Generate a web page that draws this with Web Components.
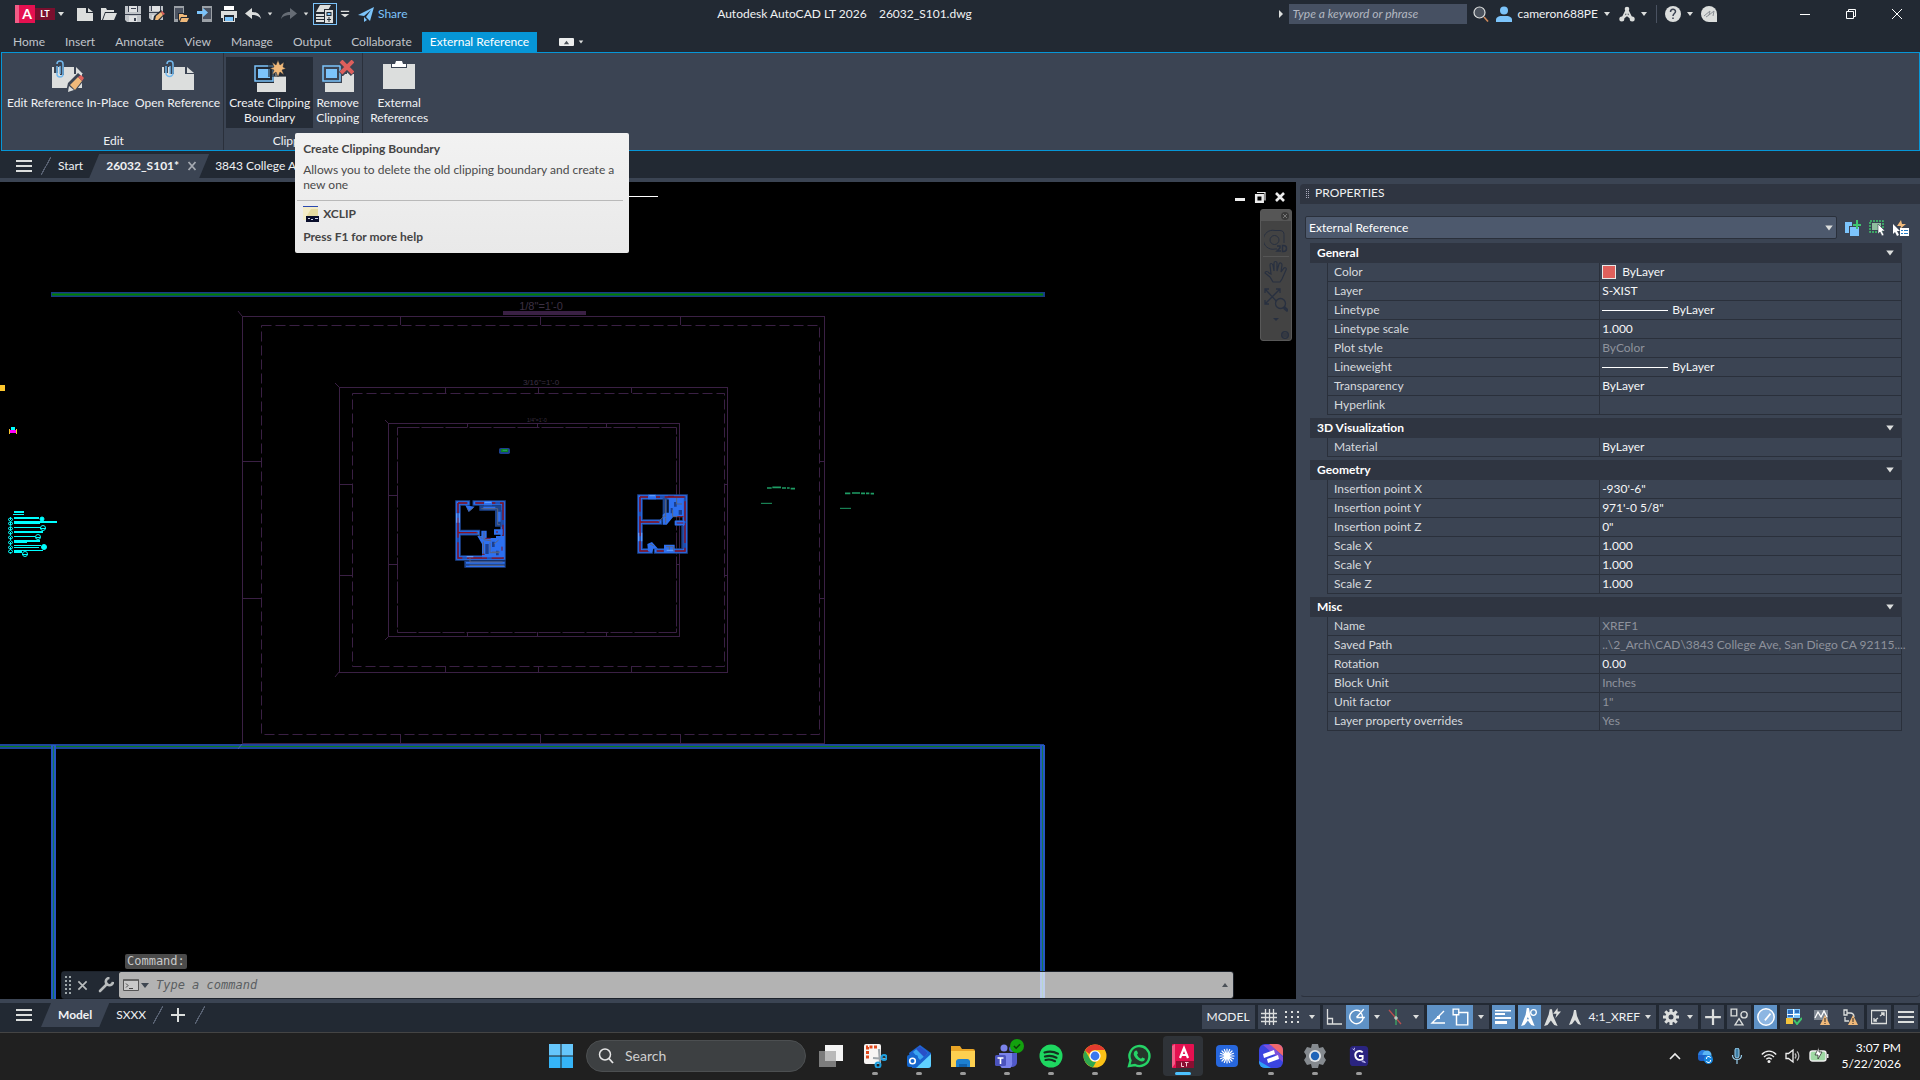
<!DOCTYPE html>
<html lang="en">
<head>
<meta charset="utf-8">
<title>Autodesk AutoCAD LT 2026 - 26032_S101.dwg</title>
<style>
  :root {
    --dark: #222933; --panel: #3b4453; --head: #2f3541; --blue: #0696d7; --hi: #5f92c6;
    --text: #f0f1f3; --line: #2a303b;
  }
  body { margin: 0; background: #000; color: var(--text); font: 12px/16px Lato, "Noto Sans", sans-serif; overflow: hidden; }
</style>
</head>
<body>
<cad-app></cad-app>
<script>
const BASE = `
  *{box-sizing:border-box}
  button{font:inherit;color:inherit;background:none;border:0;padding:0;margin:0;display:flex;align-items:center;justify-content:center;white-space:nowrap}
  .row{display:flex;align-items:center}
`;
function define(name, css, html, setup) {
  const t = document.createElement('template');
  t.innerHTML = `<style>${BASE}${css}</style>${html}`;
  customElements.define(name, class extends HTMLElement {
    connectedCallback() {
      if (this.shadowRoot) return;
      this.attachShadow({ mode: 'open' }).append(t.content.cloneNode(true));
      if (setup) setup.call(this, this.shadowRoot);
    }
  });
}

/* Icon library: [viewBox size, markup] */
const W = '#dcdedd', B = '#7cc4fb', O = '#f0b97a', G = '#3fc66e';
const PAGE = `<path fill="${W}" d="M0 2h9v5h7v8H0z"/><path fill="${W}" d="M11 2l5 4h-5z"/>`;
const ICONS = {
  new: [16, PAGE],
  open: [16, `<path fill="${W}" d="M0 2h5l1 2h7v2H4L1 14H0zM4.500 7H16l-3 7H2z"/>`],
  save: [16, `<path fill="#bfc3c8" d="M0 0h16v16H2l-2-2z"/><path fill="#3a4150" d="M3 0h1v6H3zM12 0h1v6h-1zM0 8h16v1H0z"/><path fill="#dfe1e3" d="M4 0h8v6H4zM4 10h8v6H4z"/><path fill="#3a4150" d="M9 12h2v3H9zM6 2h5v1H6z"/>`],
  saveas: [16, `<path fill="#bfc3c8" d="M0 0h14v14H2l-2-2z"/><path fill="#3a4150" d="M2 0h1v5H2zM11 0h1v5h-1zM0 6h14v1H0z"/><path fill="#dfe1e3" d="M3 0h8v5H3zM3 9h7v5H3z"/><path fill="#222933" d="M4 15l1-5 7-6 4 4-6 7z"/><path fill="${O}" d="M6 14l1-4 5-4 2 3-5 5z"/><path fill="#e0605c" d="M12 6l1-1 3 3-2 1z"/>`],
  phoneopen: [16, `<path fill="#9ba0a6" d="M1 0h10v16H1z"/><path fill="#4b5260" d="M2 2h8v11H2z"/><path fill="#222933" d="M5 7h11v9H5z"/><path fill="${O}" d="M6 8h4l1 1h3v2H8l-2 4zM8.500 12H16l-2 4H7z"/>`],
  phonesave: [16, `<path fill="#9ba0a6" d="M5 0h10v16H5z"/><path fill="#4b5260" d="M6 2h8v11H6z"/><path fill="#7cc4fb" d="M0 5h6V2l5 4.500-5 4.500V8H0z"/>`],
  print: [16, `<path fill="#fff" d="M3 0h10v4H3z"/><path fill="${W}" d="M0 5h16v7h-3V9H3v3H0z"/><path fill="${B}" d="M4 11h8v4H4z"/><path fill="${W}" d="M2 10h1v6H2zM13 10h1v6h-1zM3 15h10v1H3z"/>`],
  undo: [16, `<path fill="${W}" d="M7 2v4c5 0 8 2 9 7-2-3-5-4-9-4v4L0 7.500z"/>`],
  redo: [16, `<path fill="#666c75" d="M9 2v4C4 6 1 8 0 13c2-3 5-4 9-4v4l7-5.500z"/>`],
  sheet: [20, `<path fill="${W}" d="M5 1h11l-4 7H1zM1 10h8v2H1zM1 13h8v2H1zM1 16h8v2H1z"/><path fill="#222933" d="M9 5h10v15H9z"/><path fill="${W}" d="M10 6h8v13h-8z"/><path fill="#222933" d="M11.500 8h5v4h-5zM13.500 13h1v5h-1zM12 15h4v1h-4z"/><path fill="${B}" d="M12.500 9h3v2h-3z"/>`],
  dd: [8, `<path fill="${W}" d="M1 2h6L4 6z"/>`],
  ddbar: [12, `<path fill="${W}" d="M1 2h10v1.500H1zM1 6h10l-5 4z"/>`],
  play: [8, `<path fill="${W}" d="M2 0l4 4-4 4z"/>`],
  share: [16, `<path fill="${B}" d="M0 9L16 1l-4 14-4-4 5-7-7 6zM6 11l3 3-3 2z"/>`],
  mag: [16, `<circle cx="6.500" cy="6.500" r="5.500" fill="#4c535e" stroke="${W}" stroke-width="1.200"/><path stroke="#d08a5a" stroke-width="1.600" d="M11 11l4 4.500"/>`],
  user: [16, `<circle cx="8" cy="4.500" r="4" fill="${B}"/><path fill="${B}" d="M0 16v-2c0-3 3-4 5-4h6c2 0 5 1 5 4v2z"/>`],
  apps: [16, `<path stroke="${W}" stroke-width="1.800" fill="none" d="M8 3v5M8 3L3 13M8 3l5 10M3 13l5-4 5 4"/><circle cx="8" cy="3" r="2.300" fill="${W}"/><circle cx="2.800" cy="13" r="2.500" fill="${W}"/><circle cx="13.200" cy="13" r="2.500" fill="${W}"/>`],
  help: [16, `<circle cx="8" cy="8" r="8" fill="${W}"/><path fill="none" stroke="#3a4150" stroke-width="1.500" d="M5.500 6c0-3.500 5-3.500 5-.5 0 2-2.500 2-2.500 4.500M8 11.500v1.500"/>`],
  feedback: [16, `<path fill="${W}" d="M8 0a8 8 0 0 1 8 8v8H8A8 8 0 0 1 8 0z"/><path stroke="#8a8f96" fill="none" d="M3 10l6-5-1 4 5-4-1 5M5 11l3-2"/>`],
  wmin: [12, `<path stroke="#fff" d="M1 6.500h10"/>`],
  wmax: [12, `<path stroke="#fff" fill="none" d="M1.500 3.500h7v7h-7zM3.500 3V1.500h7v7H9"/>`],
  wclose: [12, `<path stroke="#fff" fill="none" d="M1 1l10 10M11 1L1 11"/>`],
  burger: [16, `<path fill="${W}" d="M0 2h16v2H0zM0 7h16v2H0zM0 12h16v2H0z"/>`],
  plus: [16, `<path fill="${W}" d="M7 1h2v14H7zM1 7h14v2H1z"/>`],
  tabx: [10, `<path stroke="#a4a9b1" stroke-width="1.800" d="M1.500 1l7 8M8.500 1l-7 8"/>`],
  editref: [32, `<path fill="${W}" d="M0 7h22v7h8v14H0z"/><path fill="${W}" d="M24 7l7 7h-7z"/><path fill="none" stroke="#3b4453" stroke-width="4" d="M10 15V4a3 3 0 0 0-6 0v9"/><path fill="none" stroke="#73b9ee" stroke-width="1.500" d="M5 6v8a3 3 0 0 0 6 0V4a3 3 0 0 0-6 0M8 6v8"/><path fill="#3b4453" d="M14 32l2-9 10-10 7 6-8 10z"/><path fill="${O}" d="M18 25l8-8 4 4-7 9z"/><path fill="#e0605c" d="M26 17l3-2 3 3-2 3z"/><path fill="${W}" d="M17 26l5 4-6 2z"/>`],
  openref: [32, `<path fill="${W}" d="M0 7h23v7h9v16H0z"/><path fill="${W}" d="M25 7l7 6h-7z"/><path fill="none" stroke="#3b4453" stroke-width="4" d="M10 14V4a3 3 0 0 0-6 0v9"/><path fill="none" stroke="#73b9ee" stroke-width="1.500" d="M4 6v7a3.500 3.500 0 0 0 7 0V4a3 3 0 0 0-6 0M8 6v8"/>`],
  clip: [32, `<path fill="${W}" d="M3 16h18v-4h4v4h7v16H3z"/><path fill="#222933" d="M0 4h20v19H0z"/><path fill="none" stroke="${B}" stroke-width="1.500" d="M1 6h18v15H1z"/><path fill="${B}" d="M4 9h12v9H4z"/><path fill="#222933" d="M14 0h18v17H14z" opacity=".6"/><path fill="${O}" stroke="#222933" stroke-width=".5" d="M24 0l2 5 4-3-1 5 3 1.500-4 1.500 2 5-4-3-2 5-2-5-4 3 2-5-4-1.500 4-1.500-2-5 4 3z"/>`],
  remclip: [32, `<path fill="${W}" d="M3 16h18v-2h11v18H3z"/><path fill="${W}" d="M25 12l7 4h-7z"/><path fill="#3b4453" d="M0 4h20v19H0z"/><path fill="none" stroke="${B}" stroke-width="1.500" d="M1 6h17v15H1z"/><path fill="${B}" d="M4 9h11v9H4z"/><path stroke="#3b4453" stroke-width="6" d="M19 2l12 12M31 2L19 14"/><path stroke="#dd5f5c" stroke-width="4" d="M19 1l12 12M31 1L19 13"/>`],
  extref: [32, `<path fill="${W}" d="M0 4h32v25H0z"/><path fill="#3b4453" d="M8 4h16v4H8z"/><path fill="#fff" d="M9 4h3l1-3h6l1 3h3v3H9z"/>`],
  xclip: [16, `<path fill="#f3ecc9" d="M0 0h15v14H0z"/><path fill="#e6dca0" d="M8 3h7v8H3z"/><path fill="#2a49b0" d="M0 0h15v1H0z"/><path fill="#0a0f2c" d="M3 10h13v6H3z"/><path fill="#cfd4e6" d="M5 12h2v1H5zM8 13h2v1H8zM12 12h3v1h-3z"/>`],
  pickadd: [16, `<path fill="${B}" d="M0 2h7v4H4v7H0zM5 7h9v9H5z"/><path fill="${G}" d="M11 0h2v4h3v2h-3v3h-2V6H8V4h3z"/>`],
  selobj: [16, `<path fill="none" stroke="${G}" stroke-width="1.500" stroke-dasharray="2 1" d="M1 1h13v11H1z"/><path fill="#8fbf9f" d="M3 3h9v7H3z"/><path fill="#fff" stroke="#3b4453" stroke-width=".6" d="M9 4v10l2-2 2 4 2-1-2-4h3z"/>`],
  quick: [16, `<path fill="${O}" d="M8 0L4 6h4L7 9l6-5H9z"/><path fill="#fff" d="M0 4v10l2-2 2 4 2-1-2-4h3z"/><path fill="#fff" d="M7 8h9v8H7z"/><path fill="#2a7ec4" d="M8 10h2v1H8zM11 10h4v1h-4zM8 13h2v1H8zM11 13h4v1h-4z"/>`],
  grid: [16, `<path stroke="${W}" stroke-width="1.300" d="M4.500 0v16M8.500 0v16M12.500 0v16M0 4.500h16M0 8.500h16M0 12.500h16"/>`],
  snap: [16, `<path fill="${W}" d="M1 2h2v2H1zM7 2h2v2H7zM13 2h2v2h-2zM1 7h2v2H1zM7 7h2v2H7zM13 7h2v2h-2zM1 12h2v2H1zM7 12h2v2H7zM13 12h2v2h-2z"/>`],
  ortho: [16, `<path fill="none" stroke="${W}" stroke-width="1.300" d="M1.500 0v15H16M1.500 9.500h5V15"/>`],
  polar: [16, `<path fill="none" stroke="#fff" stroke-width="1.300" d="M13.500 9A6 6 0 1 1 11 3M7.500 8.500H15M7.500 8.500L14 1M11 4c1.500 1 2 3 2 4.500"/>`],
  iso: [16, `<path stroke="#b9504f" stroke-width="1.300" d="M1 1l12 14"/><path stroke="#3faa66" stroke-width="1.300" d="M8 0v16"/><path stroke="${W}" d="M6 9h4M8 7v4"/>`],
  track: [16, `<path fill="none" stroke="#fff" stroke-width="1.400" d="M14 2L2 14h13"/><path fill="#fff" d="M7 7h3v3H7z"/>`],
  osnap: [16, `<path fill="none" stroke="#fff" stroke-width="1.300" d="M4 4h10v11H4z"/><path fill="#5f92c6" stroke="#fff" stroke-width="1.200" d="M1 1h5v5H1z"/>`],
  lwt: [16, `<path fill="#fff" d="M0 1h16v1.500H0zM0 4h10v2H0zM0 8h16v2H0zM0 12h12v3H0z"/>`],
  ann1: [16, `<path fill="#fff" d="M6 0h2l1 6 4 10-3-1-3-4-3 4-3 1L5 6zM7 8l-1 2h2z"/><circle cx="12" cy="4" r="2.500" fill="none" stroke="#fff" stroke-width="1.200"/>`],
  ann2: [16, `<path fill="${W}" d="M6 1h2l1 6 4 9-3-1-3-4-3 4-3 1L5 6z"/><path fill="${W}" d="M13 0L9 5h3l-1 4 5-6h-3z"/>`],
  ann3: [16, `<path fill="${W}" d="M7 1h2l1 6 4 9-3-1-3-4-3 4-3 1L6 6z"/>`],
  gear: [16, `<path stroke="${W}" stroke-width="3" d="M8 0v16M0 8h16M2.300 2.300l11.400 11.400M13.700 2.300L2.300 13.700"/><circle cx="8" cy="8" r="5.500" fill="${W}"/><circle cx="8" cy="8" r="2.500" fill="#3b4453"/>`],
  isolate: [16, `<path fill="none" stroke="${W}" stroke-width="1.200" d="M1 1h5v6H1zM8 9.500l3.500 5.500h-7z"/><circle cx="12.500" cy="6" r="2.800" fill="none" stroke="${W}" stroke-width="1.200"/>`],
  perf: [16, `<circle cx="8" cy="8" r="7.300" fill="#8db6e2" stroke="#fff" stroke-width="1.300"/><path stroke="#fff" stroke-width="1.500" d="M7 11l5-6"/>`],
  xrefok: [16, `<path fill="${B}" d="M1 0h13v9H1z"/><path fill="#2f6ebc" d="M2 1h5v7H2zM9 1h4v3H9z"/><path stroke="#fff" d="M7.500 0v8M1 5.500h13"/><path fill="#f3c33c" d="M0 9h7v6H0z"/><path fill="none" stroke="${G}" stroke-width="2" d="M8 11l3 4 5-6"/>`],
  warn1: [16, `<path fill="#7e8792" d="M0 1h14v10H0z"/><path fill="none" stroke="#fff" stroke-width="1.300" d="M1 9l3-6 3 5 3-6 3 6"/><path fill="${O}" d="M11 6l5 10H6z"/><path stroke="#5b4a3a" stroke-width="1.300" d="M11 9v4M11 14v1"/>`],
  warn2: [16, `<path fill="none" stroke="${W}" stroke-width="1.300" d="M2 1h3v5H2zM5 4h3c3 0 4 2 4 4M3 8v4h4"/><path fill="${O}" d="M11 6l5 10H6z"/><path stroke="#5b4a3a" stroke-width="1.300" d="M11 9v4M11 14v1"/>`],
  clean: [16, `<path fill="none" stroke="${W}" stroke-width="1.300" d="M.5 1.500h15v13H.5zM9 7l4-3M13 7V4h-3M7 9l-4 3M3 9v3h3"/>`],
  cmdx: [12, `<path stroke="#b8bcbd" stroke-width="1.800" d="M1.500 1.500l9 9M10.500 1.500l-9 9"/>`],
  wrench: [16, `<path stroke="#b8bcbd" stroke-width="2.600" stroke-linecap="round" d="M2 14l7-7"/><path fill="none" stroke="#b8bcbd" stroke-width="2.600" d="M11.500 1A3.600 3.600 0 1 0 15 5"/>`],
  prompt: [16, `<path fill="#c9c9c9" stroke="#555" d="M.5 2.500h15v11H.5z"/><path fill="#666" d="M1 2h14v2H1z"/><path fill="none" stroke="#444" d="M3 6.500l2 2-2 2M6 11.500h4"/>`],
  ddark: [8, `<path fill="#3e4650" d="M0 2h8L4 7z"/>`],
  uparr: [8, `<path fill="#4b5158" d="M1 6h6L4 2z"/>`],
  vmin: [12, `<path fill="#ececec" d="M1 7h10v3H1z"/>`],
  vmax: [12, `<path fill="none" stroke="#ececec" stroke-width="2.500" d="M2.200 4.200h6.500v6.500H2.200z"/><path fill="none" stroke="#ececec" stroke-width="1.200" d="M3 1.500h8v8"/>`],
  vx: [12, `<path stroke="#ececec" stroke-width="2.600" d="M2 2l8 8M10 2l-8 8"/>`],
  wheel: [24, `<path fill="none" stroke="#283040" d="M11 1.500h5c3 0 4 2 4 4V14M11 1.500A9.500 9.500 0 1 0 11 20h2"/><circle cx="10.500" cy="11" r="4.500" fill="none" stroke="#283040"/><path fill="none" stroke="#283040" stroke-width="1.500" d="M13 17h3v2l-3 3h4M18.500 16.500v6h1c4 0 4-6 0-6z"/>`],
  hand: [24, `<path fill="none" stroke="#283040" stroke-width="1.200" d="M9 22l-3-5-5-4c0-2 3-2 4 0l2 1L6 5c0-2 2-2 3 0l1 6V3c0-2 3-2 3 0v8l2-7c1-2 3-1 3 1l-1 7 3-4c1-1 3 0 2 2l-4 9-2 3z"/>`],
  zoomext: [24, `<path fill="none" stroke="#283040" stroke-width="1.300" d="M1 1l14 15M16 1L1 16M1 5V1h4M12 1h4v4M1 12v4h4"/><circle cx="16.500" cy="15.500" r="5" fill="#434343" stroke="#283040" stroke-width="1.300"/><path stroke="#283040" stroke-width="3" d="M20 19.500l4 3.500"/>`],
  ddnav: [8, `<path fill="#283040" d="M1 2h6L4 5z"/>`],
  navx: [8, `<circle cx="4" cy="4" r="4" fill="#3a3a3a"/><path stroke="#777" d="M2 2l4 4M6 2L2 6"/>`],
  navm: [8, `<circle cx="4" cy="4" r="3.400" fill="none" stroke="#283040" stroke-width="1.200"/><path stroke="#283040" d="M1 3h6M1 5h6"/>`],
  win: [24, `<path fill="#66c6fb" d="M0 0h11.500v11.500H0zM12.500 0H24v11.500H12.500z"/><path fill="#35b4f7" d="M0 12.500h11.500V24H0zM12.500 12.500H24V24H12.500z"/>`],
  search: [16, `<circle cx="7" cy="6.500" r="5.500" fill="none" stroke="#e6e6e6" stroke-width="1.500"/><path stroke="#e6e6e6" stroke-width="1.800" d="M11 10.500l4 4.500"/>`],
  taskview: [24, `<path fill="#7c7c7c" d="M0 7h17v16H0z"/><path fill="#f4f4f4" d="M6 1h18v16H6z"/><path fill="#b9b9b9" d="M6 7h11v10H6z"/>`],
  snip: [24, `<rect x="1" y="0" width="17" height="20" rx="2" fill="#f7f5f4"/><path fill="none" stroke="#e0481c" stroke-width="3" stroke-dasharray="3 1.500" d="M14 3H4.500v13"/><path stroke="#9fa6ab" stroke-width="2.200" d="M16 5l1 13M10 14l13 1"/><circle cx="21" cy="13.500" r="2.500" fill="none" stroke="#1ea0e0" stroke-width="2"/><circle cx="15" cy="21" r="2.500" fill="none" stroke="#1ea0e0" stroke-width="2"/>`],
  outlook: [24, `<path fill="#1a63cf" d="M2 9L13 1l11 8v12a3 3 0 0 1-3 3H5z"/><path fill="#5fd0ff" d="M24 10v11a3 3 0 0 1-3 3H9z"/><path fill="#3aa4f0" d="M6 8l7-6 8 7-8 7z"/><path fill="#2850c8" d="M13 2l8 7-4 4-8-8z"/><rect y="11" width="11" height="12" rx="2" fill="#1466cc"/><circle cx="5.500" cy="17" r="2.800" fill="none" stroke="#fff" stroke-width="1.600"/>`],
  explorer: [24, `<path fill="#e9a526" d="M0 2h9l2 3h11a2 2 0 0 1 2 2v3H0z"/><path fill="#fdd050" d="M0 7h24v16H0z"/><path fill="#1d7fd0" d="M5 17a3 3 0 0 1 3-2h8a3 3 0 0 1 3 2v6H5z"/><path fill="#1161ab" d="M8 20h8v3H8z"/>`],
  teams: [24, `<circle cx="9" cy="4" r="3.500" fill="#7b83eb"/><circle cx="17" cy="5" r="3" fill="#5059c9"/><path fill="#5059c9" d="M13 9h9v9a5 5 0 0 1-9 3z"/><path fill="#7b83eb" d="M4 9h13v9a6 6 0 0 1-12 3z"/><rect y="11" width="11" height="11" rx="1.500" fill="#4b53bc"/><path stroke="#fff" stroke-width="1.600" d="M2.500 14h6M5.500 14v6"/>`],
  check: [16, `<circle cx="8" cy="8" r="8" fill="#13a10e"/><path fill="none" stroke="#0c3d0a" stroke-width="1.800" d="M4.500 8l2.500 2.500L11.500 6"/>`],
  spotify: [24, `<circle cx="12" cy="12" r="11.500" fill="#1ed760"/><path fill="none" stroke="#14301f" stroke-width="2.200" stroke-linecap="round" d="M5.500 8.500c4.500-1.500 9.500-1 13.500 1.200M6 12.500c4-1.200 8-.7 11.500 1.200M6.500 16c3.500-1 6.500-.5 9.500 1.200"/>`],
  chrome: [24, `<circle cx="12" cy="12" r="11.500" fill="#fbc116"/><path fill="#e33b2e" d="M12 .5A11.500 11.500 0 0 1 22 6H12a6 6 0 0 0-5.500 4L2 6.500A11.500 11.500 0 0 1 12 .5z"/><path fill="#2fa84f" d="M2 6.300L7 15a6 6 0 0 0 6 3l-3 5.300A11.500 11.500 0 0 1 2 6.300z"/><circle cx="12" cy="12" r="5.600" fill="#fff"/><circle cx="12" cy="12" r="4.400" fill="#3a78ee"/>`],
  whatsapp: [24, `<path fill="#26352b" stroke="#25d366" stroke-width="2.400" d="M2 22l1.500-5.500A10 10 0 1 1 8 21z"/><path fill="#25d366" d="M8 7c1-1 2-.5 2.300.5l.7 1.700-1 1.500c1 2 2 3 4 4l1.300-1.300 2.500 1.200c.5 3-3 3.400-5 2.400-3-1.300-5-3.500-6-6C6.500 9.500 7 8 8 7z"/>`],
  acad: [24, `<rect x="1" width="22" height="24" rx="1" fill="#e51050"/><path fill="#8a0f32" d="M5 17h18v7H5z"/><path fill="#f25c86" d="M1 2l3-2v20l-3 4z"/><path fill="none" stroke="#fff" stroke-width="2.200" d="M9 14l4-10 4 10M10.500 11h5"/><path stroke="#f3c8d4" fill="none" d="M10.500 18.500v4h2.500M14 18.500h3.500M15.500 18.500v4"/>`],
  burst: [24, `<rect x="1" y="1" width="22" height="22" rx="4" fill="#2767dd"/><path stroke="#fff" stroke-width="1.200" stroke-linecap="round" d="M12 5v14M5 12h14M7 7l10 10M17 7L7 17M9.300 5.500l5.400 13M5.500 14.700l13-5.400M14.700 5.500l-5.400 13M5.500 9.300l13 5.400"/>`],
  paper: [24, `<rect width="24" height="24" rx="6" fill="#3a45e0"/><path fill="#f0686c" d="M10 0h8a6 6 0 0 1 6 6v6z"/><path fill="#9a55d8" d="M4 1h8l12 12v5z" opacity=".7"/><path fill="#2fa0f5" d="M0 17l12 7H6a6 6 0 0 1-6-6z"/><path fill="#fff" d="M4 10l11-4 1 4-11 4zM8 15l11-4 1 4-11 4z"/>`],
  settings: [24, `<path fill="#858a8f" d="M9 0h6l1 4 4-1 3 5-2 3v2l2 3-3 5-4-1-1 4H9l-1-4-4 1-3-5 2-3v-2L1 8l3-5 4 1z"/><circle cx="12" cy="12" r="6" fill="#e3e6e8"/><circle cx="12" cy="12" r="4.200" fill="#1f64b8"/>`],
  gapp: [24, `<rect x="2" y="1" width="20" height="22" rx="4" fill="#2a2480"/><path fill="none" stroke="#fff" stroke-width="2" d="M16 8c-3-3-9-1-8 4s7 5 8 3v-3h-4"/><path stroke="#cfc8ff" d="M5 4l2 2M7 3v2M16 17l3 2M15 18l4 1"/>`],
  chev: [12, `<path fill="none" stroke="#eee" stroke-width="1.600" d="M1 9l5-5 5 5"/>`],
  cloud: [16, `<circle cx="6" cy="7" r="5" fill="#2a7de0"/><circle cx="10" cy="7" r="4.500" fill="#5cb6f5"/><path fill="#1c5fc4" d="M1 7h9v6H4a3 3 0 0 1-3-3z"/><circle cx="11.500" cy="11.500" r="4.500" fill="#1787e0"/><path fill="none" stroke="#fff" d="M9.500 11a2 2 0 0 1 4-1M13.500 12a2 2 0 0 1-4 1"/>`],
  mic: [16, `<rect x="6" y="0" width="4" height="10" rx="2" fill="#3d7ea6" stroke="#9ad0ee"/><path fill="none" stroke="#9ad0ee" stroke-width="1.200" d="M3.500 7c0 6 9 6 9 0M8 12v4"/>`],
  wifi: [16, `<path fill="none" stroke="#f0f0f0" stroke-width="1.400" d="M.8 6.500c4-4.500 10.400-4.500 14.400 0M3 9c3-3.200 7-3.200 10 0M5.300 11.300c1.700-1.700 3.700-1.700 5.400 0"/><circle cx="8" cy="13.500" r="1.500" fill="#f0f0f0"/>`],
  speaker: [16, `<path fill="none" stroke="#f0f0f0" stroke-width="1.300" d="M1 5.500h2.500L8 2v12L3.500 10.500H1z"/><path fill="none" stroke="#bbb" stroke-width="1.200" d="M10 5.500c1.300 1.500 1.300 3.500 0 5M12 3.500c2.500 2.500 2.500 6.500 0 9"/>`],
  battery: [20, `<rect x="1" y="5" width="16" height="10" rx="2.500" fill="#9fd9a4" stroke="#eee" stroke-width="1.400"/><path fill="#eee" d="M18 8h1.500v4H18z"/><path fill="#fff" stroke="#202020" stroke-width=".7" d="M10 1L6 9h3v4l4-7h-3z"/>`],
};
customElements.define('ui-icon', class extends HTMLElement {
  connectedCallback() {
    if (this.shadowRoot) return;
    const [vb, body] = ICONS[this.getAttribute('name')];
    const s = this.getAttribute('size') || vb;
    this.attachShadow({ mode: 'open' }).innerHTML =
      `<style>:host{display:block;flex:none;width:${s}px;height:${s}px}svg{display:block}</style>
       <svg width="${s}" height="${s}" viewBox="0 0 ${vb} ${vb}" fill="none" aria-hidden="true">${body}</svg>`;
  }
});
const ic = (n, s) => `<ui-icon name="${n}"${s ? ` size="${s}"` : ''}></ui-icon>`;

/* Title bar */
define('cad-titlebar', `
  :host{display:flex;align-items:center;height:28px;background:var(--dark);padding-left:15px;flex:none}
  .left{gap:8px}
  .logo{gap:0;margin-right:4px}
  .a{width:20px;height:18px;background:#e51050;color:#fff;font-weight:700;font-size:14px;line-height:18px;text-align:center;border-left:4px solid #f25c86}
  .lt{width:20px;height:12px;line-height:12px;background:#7a0f2e;color:#fff;font-size:9px;font-weight:700;text-align:center}
  .logo ui-icon{margin-left:2px}
  .hist{gap:6px}.hist+.hist{margin-right:-4px}
  .on{width:24px;height:22px;border:1px solid #7cc4fb}
  .cust{margin-left:-5px}
  .share{color:#7cc4fb;gap:4px}
  h1{flex:1;margin:0;padding-left:4px;font-size:12px;font-weight:400;text-align:center;white-space:pre}
  .find{width:178px;height:20px;background:#465062;border:0;padding:0 3px;margin:0 6px 0 4px;color:#c3c7ce;font:italic 12px/20px Lato,sans-serif;outline:0}
  .find::placeholder{color:#b3b8c1;opacity:1}
  .right{gap:5px}
  .query{display:flex;align-items:center}
  .who{gap:5px;margin-left:2px}
  .sep{width:1px;height:18px;background:#4a5261;margin:0 3px}
  .win{margin-left:65px}
  .win button{width:46px;height:28px}
`, `
  <div class="row left">
    <button class="logo" aria-label="Application menu"><span class="a">A</span><span class="lt">LT</span>${ic('dd')}</button>
    <button aria-label="New">${ic('new')}</button><button aria-label="Open">${ic('open')}</button>
    <button aria-label="Save">${ic('save')}</button><button aria-label="Save as">${ic('saveas')}</button>
    <button aria-label="Open from mobile">${ic('phoneopen')}</button><button aria-label="Save to mobile">${ic('phonesave')}</button>
    <button aria-label="Plot">${ic('print')}</button><button class="hist" aria-label="Undo">${ic('undo')}${ic('dd', 6)}</button>
    <button class="hist" aria-label="Redo">${ic('redo')}${ic('dd', 6)}</button>
    <button class="on" aria-label="Sheet set">${ic('sheet')}</button><button class="cust" aria-label="Customize">${ic('ddbar', 10)}</button>
    <button class="share">${ic('share')}<span>Share</span></button>
  </div>
  <h1>Autodesk AutoCAD LT 2026    26032_S101.dwg</h1>
  <div class="row right">
    <div class="query">${ic('play', 8)}<input class="find" type="search" aria-label="Search help" placeholder="Type a keyword or phrase"><button aria-label="Search">${ic('mag')}</button></div>
    <button class="who">${ic('user')}<span>cameron688PE</span>${ic('dd', 8)}</button>
    <button aria-label="Apps" style="margin-left:3px">${ic('apps')}</button>${ic('dd', 8)}<span class="sep"></span>
    <button aria-label="Help">${ic('help')}</button>${ic('dd', 8)}<button aria-label="Feedback" style="margin-left:2px">${ic('feedback')}</button>
  </div>
  <div class="row win"><button aria-label="Minimize">${ic('wmin')}</button><button aria-label="Restore">${ic('wmax')}</button><button aria-label="Close">${ic('wclose')}</button></div>
`);

/* Ribbon tabs */
define('cad-menubar', `
  :host{display:flex;height:24px;background:var(--dark);padding-left:3px;flex:none;align-items:flex-end}
  button{height:20px;padding:0 10px;color:#c0c4ca}
  .on{background:var(--blue);color:#fff;padding:0 8px}
  .mini{margin-left:12px;gap:4px}
  .mini i{width:15px;height:8px;background:#eceded;border-radius:1px;display:flex;align-items:center;justify-content:center}
`, `
  <button>Home</button><button>Insert</button><button>Annotate</button><button>View</button><button>Manage</button>
  <button>Output</button><button>Collaborate</button><button class="on">External Reference</button>
  <button class="mini" aria-label="Minimize ribbon"><i>${ic('uparr', 7)}</i>${ic('dd', 6)}</button>
`);

/* Ribbon */
define('ribbon-button', `
  :host{display:block;position:relative}
  button{flex-direction:column;justify-content:flex-start;height:71px;padding:3px 3px 0;gap:3px}
  .txt{white-space:pre-line;line-height:15px;text-align:center}
  :host([on]) button{background:#252c37}
`, `<button><span class="txt"><slot></slot></span></button><slot name="tip"></slot>`,
function (r) { r.querySelector('button').insertAdjacentHTML('afterbegin', ic(this.getAttribute('icon'), 32)); });
define('ribbon-panel', `
  :host{display:flex;flex-direction:column;border-right:1px solid var(--line);padding:4px 0 0 2px}
  :host([last]){border:0;padding-left:4px}
  .tools{display:flex;height:71px}
  .cap{text-align:center;line-height:26px;height:22px}
`, `<div class="tools"><slot></slot></div><div class="cap"></div>`,
function (r) { r.querySelector('.cap').textContent = this.getAttribute('label') || ''; });
define('cad-tooltip', `
  :host{position:absolute;z-index:10;left:69px;top:76px;width:334px;height:120px;background:linear-gradient(#f2f2f2,#e9e9e9);border-radius:2px;color:#4a4a4a;padding:8px 6px 0 8px;white-space:normal;display:block}
  p{margin:0;line-height:15px}
  .b{font-weight:700;line-height:16px;color:#454545}
  .d{margin-top:5px}
  hr{border:0;border-top:1px solid #b9b9b9;margin:8px 0 5px -6px}
  .c{gap:4px}
  .f{margin-top:7px}
`, `<p class="b">Create Clipping Boundary</p><p class="d">Allows you to delete the old clipping boundary and create a new one</p>
  <hr><div class="row c b">${ic('xclip')}<span>XCLIP</span></div><p class="b f">Press F1 for more help</p>`);
define('cad-ribbon', `
  :host{display:flex;height:99px;background:var(--panel);border:1px solid var(--blue);margin-left:1px;flex:none}
`, `
  <ribbon-panel label="Edit"><ribbon-button icon="editref">Edit Reference In-Place</ribbon-button><ribbon-button icon="openref">Open Reference</ribbon-button></ribbon-panel>
  <ribbon-panel label="Clipping">
    <ribbon-button icon="clip" on>Create Clipping
Boundary<cad-tooltip slot="tip"></cad-tooltip></ribbon-button>
    <ribbon-button icon="remclip">Remove
Clipping</ribbon-button></ribbon-panel>
  <ribbon-panel last><ribbon-button icon="extref">External
References</ribbon-button></ribbon-panel>
`);

/* Slanted tabs for files and layouts */
define('slant-tab', `
  :host{display:block}
  button{height:24px;padding:0 17px;gap:8px}
  :host([closable]) button{padding-right:12px}
  :host([on]) button{background:var(--panel);font-weight:700;clip-path:polygon(10px 0,100% 0,calc(100% - 10px) 100%,0 100%)}
`, `<button><slot></slot></button>`);
define('slash-mark', `:host{display:block;width:10px;height:18px;background:linear-gradient(to top left,transparent 46%,#596273 47%,#596273 53%,transparent 54%)}`, ``);
define('cad-filetabs', `
  :host{display:flex;align-items:flex-end;height:31px;background:var(--dark);border-bottom:4px solid var(--panel);padding-left:16px;flex:none}
  .lead{height:24px}
  slash-mark{margin-left:9px}
`, `
  <button class="lead" aria-label="Files">${ic('burger')}</button><div class="row lead"><slash-mark></slash-mark></div>
  <slant-tab style="margin:0 -11px 0 -10px">Start</slant-tab><slant-tab on closable>26032_S101*${ic('tabx')}</slant-tab>
  <slant-tab style="margin-left:-11px">3843 College Ave</slant-tab>
`);

/* Drawing area */
const P = '#3a2044';
const frame = (x, y, r, b, dx, dy, dr, db, dash) =>
  `<rect x="${x}.5" y="${y}.5" width="${r - x}" height="${b - y}"/><rect x="${dx}.5" y="${dy}.5" width="${dr - dx}" height="${db - dy}" stroke-dasharray="${dash}"/>`;
const seg = (...a) => a.map(([x, y, X, Y]) => `M${x} ${y}L${X} ${Y}`).join('');
const walls = d => `<path d="${d}" stroke="#1d448e" stroke-width="17" stroke-linecap="square"/><path d="${d}" stroke="#2d70f0" stroke-width="11" stroke-linecap="square"/><path d="${d}" stroke="#20459c" stroke-width="5"/><path d="${d}" stroke="#8a1020" stroke-width="4" stroke-dasharray="60 14"/>`;
const fine = `stroke="#5a6480" stroke-width="3"`;
define('cad-canvas', `
  :host{display:block;position:relative;background:#000;overflow:hidden}
  .dwg{position:absolute;left:0;top:0;width:100%;height:100%}
  .vp{position:absolute;right:10px;top:9px;display:flex;gap:8px}
  .nav{position:absolute;right:4px;top:27px;width:32px;height:132px;background:#434343;border:1px solid #585858;border-radius:3px;display:flex;flex-direction:column;align-items:center}
  .nav .top{background:#565656;width:100%;height:11px;display:flex;justify-content:flex-end;align-items:center;padding-right:2px}
  .nav hr{width:26px;border:0;border-top:1px solid #555;margin:3px 0}
  .hist{position:absolute;left:125px;bottom:30px;height:15px;padding:0 2px;background:#4b4b4b;color:#c9c9c9;border-radius:2px;font:12px/15px "DejaVu Sans Mono",monospace}
  .cmd{position:absolute;left:61px;right:62px;bottom:0;height:28px;border:1px solid #1c222b;border-radius:3px;display:flex;align-items:center}
  .bar{display:flex;align-items:center;height:26px;width:57px;background:var(--dark)}
  .grip{width:6px;height:18px;margin-left:3px;background:repeating-linear-gradient(#9fa8ab 0 2px,transparent 2px 4px);-webkit-mask:repeating-linear-gradient(90deg,#000 0 2px,transparent 2px 4px);mask:repeating-linear-gradient(90deg,#000 0 2px,transparent 2px 4px)}
  .bar button{margin-left:5px;width:12px}.bar button+button{margin-left:9px;width:18px}
  .field{flex:1;height:26px;background:rgba(255,255,255,.7);display:flex;align-items:center;padding:0 4px;gap:2px;border-radius:2px}
  .field input{flex:1;background:none;border:0;outline:0;padding:0 5px;font:italic 12px/20px "DejaVu Sans Mono",monospace;color:#444}
  .field input::placeholder{color:#5a5e61;opacity:1}
  svg text{font-family:"Liberation Sans",sans-serif;fill:#3c3043}
`, `
  <svg class="dwg" fill="none"><g transform="translate(0 -182)">
    <path stroke="#fff" d="M600 196.500h58"/>
    <g stroke="${P}" stroke-width="1">
      ${frame(242, 316, 824, 743, 261, 325, 819, 734, '10 4')}
      ${frame(339, 387, 727, 672, 352, 393, 724, 666, '10 4')}
      ${frame(388, 423, 679, 636, 397, 427, 676, 632, '22 2')}
      <path d="${seg([400.5, 316, 400.5, 325], [540.5, 316, 540.5, 325], [680.5, 316, 680.5, 325], [400.5, 734, 400.5, 743], [540.5, 734, 540.5, 743], [680.5, 734, 680.5, 743],
        [242, 461.5, 261, 461.5], [242, 598.5, 261, 598.5], [819, 461.5, 824, 461.5], [819, 598.5, 824, 598.5],
        [445.5, 387, 445.5, 393], [538.5, 387, 538.5, 393], [631.5, 387, 631.5, 393], [445.5, 666, 445.5, 672], [538.5, 666, 538.5, 672], [631.5, 666, 631.5, 672],
        [339, 484.5, 352, 484.5], [339, 575.5, 352, 575.5], [724, 484.5, 727, 484.5], [724, 575.5, 727, 575.5],
        [467.5, 423, 467.5, 427], [537.5, 423, 537.5, 427], [606.5, 423, 606.5, 427], [467.5, 632, 467.5, 636], [537.5, 632, 537.5, 636], [606.5, 632, 606.5, 636],
        [388, 495.5, 397, 495.5], [388, 564.5, 397, 564.5], [676, 564.5, 679, 564.5],
        [238, 311, 242, 316], [335, 383, 339, 387], [385, 420, 388, 423], [335, 677, 339, 672], [385, 640, 388, 637])}"/>
    </g>
    <path fill="${P}" d="M503 311h83v4h-83z"/>
    <text x="541" y="310" font-size="11" text-anchor="middle">1/8"=1'-0</text>
    <text x="541" y="385" font-size="8" text-anchor="middle">3/16"=1'-0</text>
    <text x="537" y="422" font-size="5" text-anchor="middle">1/4"=1'-0</text>
    <path stroke="#173c85" stroke-width="5" d="M51 294.500h994"/><path stroke="#008000" stroke-width="2" d="M52 294.500h991"/>
    <path stroke="#1d469c" stroke-width="5" d="M0 746.500h1044"/><path stroke="#087c1c" d="M0 746.500h1043"/>
    <path stroke="#2557c4" stroke-width="5" d="M53.500 745v260M1042.500 745v260"/><path stroke="#14764a" d="M53.500 746v260M1042.500 746v260"/>
    <path stroke="#4b62a5" d="M238 749l4-5"/>
    <path fill="#fdc72e" d="M0 385h5v6H0z"/>
    <path fill="#0ff" d="M11 427h4v3h-4z"/><path fill="#f0f" d="M10 430h6v3h-6z"/><path fill="#fdc72e" d="M9 429h1v5H9zM16 429h1v5h-1z"/>
    <path fill="#0ff" d="M14 511h10v2H14zM13 514h11v1H13zM14 517h25v2H14zM14 521h43v2H14zM14 523h26v1H14zM14 527h27v1H14zM14 531h29v2H14zM14 536h21v1H14zM14 540h26v2H14zM14 542h13v1H14zM14 545h27v1H14zM14 547h25v1H14zM14 550h29v1H14zM14 551h8v2H14z"/>
    <g stroke="#0ff"><path d="M10.500 517v36" stroke-dasharray="3 2"/><path d="M8 519.500l2.500-2 2.500 2-2.500 2zM8 523.500l2.500-2 2.500 2-2.500 2zM8 528.500l2.500-2 2.500 2-2.500 2zM8 532.500l2.500-2 2.500 2-2.500 2zM8 537.500l2.500-2 2.500 2-2.500 2zM8 542.500l2.500-2 2.500 2-2.500 2zM8 547.500l2.500-2 2.500 2-2.500 2zM8 551.500l2.500-2 2.500 2-2.500 2z"/>
    <circle cx="42" cy="519" r="2" fill="#0ff"/><circle cx="43" cy="528" r="2.500"/><circle cx="38" cy="537" r="2.500"/><circle cx="44" cy="547" r="2.500" fill="#0ff"/><circle cx="25" cy="554" r="2.500"/><path d="M22 554.500h6M40 528.500h6M36 537.500h4"/></g>
    <g transform="translate(420 360) scale(.33333)">
      <rect x="237" y="264" width="33" height="18" rx="5" fill="#1b408e"/><rect x="243" y="267" width="21" height="9" fill="#0a8420"/><path stroke="#2f9b74" stroke-width="3" d="M248 271h13"/>
      <path stroke="#1e9c64" stroke-width="5" d="M1041 384h14M1057 382h26M1086 384h12M1101 384h8M1112 386h13M1275 400h16M1296 399h24M1323 400h12M1338 400h10M1352 401h10"/>
      <path stroke="#1e9c64" stroke-width="3" d="M1023 430h33M1260 445h33"/>
      ${walls('M114 429H142M166 429H249V594H114V429M114 518H172')}
      <path fill="#1d448e" d="M178 436h66v16h-66zM225 450h20v50h-20zM133 603h124v20H133z"/>
      <path fill="#2d70f0" d="M184 512h16v22h28v-6h24v64H186v-40l-14-24h12zM222 508h26v16h-26zM138 606h116v5H138zM138 617h116v4H138zM192 424h24v12h-24zM190 440h36v8h-36zM232 455h10v30h-10zM136 436l10 20 18-16z"/>
      <path fill="#1a3f92" d="M196 552h10v30h-10zM216 545h8v16h-8zM228 572h8v14h-8z"/>
      <path ${fine} d="M184 446H233V494H240M142 445l6 8 12-10M192 515v24l22 4M190 545v40M170 518l16 18M210 548v30h28M222 552l14-12M150 594v12h98M148 616h104M216 576h24"/>
      <path stroke="#7a1026" stroke-width="3" d="M186 583h8M228 516h6M246 560v12M196 535h16"/>
      <path stroke="#5c9bff" stroke-width="4" d="M110 460v28M118 460v28M194 427h20M140 590h20"/>
      ${walls('M660 411H795V489H774M795 489V573H710M690 573H660V411M660 486H718')}
      <path fill="#1d448e" d="M784 498h7v68h-7zM728 415h14v70h-14z"/>
      <path fill="#2d70f0" d="M746 414h44v56h-30l-20 24h-12v-30l8-6h10zM684 404h24v14h-24zM682 552l14-6 18 20h-14l-4 12-12-4zM732 554h32v24h-32zM764 482h30v14h-30z"/>
      <path fill="#1a3f92" d="M762 426h8v14h-8zM776 450h10v14h-10zM752 444h6v16h-6z"/>
      <path ${fine} d="M737 418v54M770 414v18h16M758 450v20h32M716 484l22-20M738 560h22v14M748 560v14M690 552l12 6M737 474v16"/>
      <path stroke="#7a1026" stroke-width="3" d="M744 409h18M770 489h20M772 470h18"/>
      <path stroke="#5c9bff" stroke-width="4" d="M656 518v26M665 518v26M688 407h18M740 571h20"/>
    </g>
  </g></svg>
  <div class="vp"><button aria-label="Minimize view">${ic('vmin')}</button><button aria-label="Restore view">${ic('vmax')}</button><button aria-label="Close view">${ic('vx')}</button></div>
  <div class="nav"><span class="top">${ic('navx')}</span><button style="margin-top:8px" aria-label="Steering wheel">${ic('wheel')}</button><hr>
    <button aria-label="Pan">${ic('hand')}</button><button style="margin-top:4px" aria-label="Zoom extents">${ic('zoomext')}</button>
    <button style="margin-top:4px" aria-label="Zoom menu">${ic('ddnav')}</button><span style="align-self:flex-end;margin:7px 2px 0 0">${ic('navm')}</span></div>
  <div class="hist">Command:</div>
  <div class="cmd"><div class="bar"><span class="grip"></span><button aria-label="Close">${ic('cmdx', 11)}</button><button aria-label="Customize">${ic('wrench')}</button></div>
    <div class="field">${ic('prompt')}${ic('ddark')}<input aria-label="Command line" placeholder="Type a command">${ic('uparr')}</div></div>
`);

/* Properties palette */
define('prop-section', `
  :host{display:block;margin-bottom:3px}
  header{display:flex;justify-content:space-between;align-items:center;height:20px;background:var(--head);padding:0 7px;font-weight:700;color:#fff}
  table{border-collapse:separate;border-spacing:0;table-layout:fixed;width:calc(100% - 17px);margin-left:17px}
  th,td{height:19px;padding:0 6px;text-align:left;font-weight:400;line-height:16px;border:0 solid var(--line);border-bottom-width:1px;border-right-width:1px;color:#d7dade;white-space:nowrap}
  th{width:47.5%;border-left-width:1px}
  td{color:#f5f6f7;padding:0 0 0 2px}
  td.dim{color:#8e929c}
  .v{display:flex;align-items:center}
  .sw{width:14px;height:14px;background:#e0605c;border:1px solid #e8e8e8;margin-right:6px}
  .ln{width:66px;height:1px;background:#fff;margin-right:4px}
`, `<header><span></span>${ic('dd', 10)}</header><table><tbody></tbody></table>`,
function (r) {
  r.querySelector('header span').textContent = this.getAttribute('label');
  const body = r.querySelector('tbody');
  for (const d of this.querySelectorAll('data')) {
    const kind = d.className, row = body.insertRow();
    const th = document.createElement('th'); th.scope = 'row'; th.textContent = d.getAttribute('name'); row.append(th);
    const td = row.insertCell(); if (kind === 'dim') td.className = 'dim';
    td.innerHTML = `<div class="v">${kind === 'sw' || kind === 'ln' ? `<span class="${kind}"></span>` : ''}<span></span></div>`;
    td.querySelector('.v>span:last-child').textContent = d.textContent;
  }
});
define('cad-properties', `
  :host{display:flex;flex-direction:column;background:var(--panel);padding:2px 0 2px 4px}
  .title{display:flex;align-items:center;height:20px;background:var(--head);border-radius:4px 0 0 0;padding:0 0 2px 6px;gap:6px;flex:none}
  .grip{width:3px;height:9px;background:repeating-linear-gradient(#aab 0 1px,transparent 1px 2px);-webkit-mask:repeating-linear-gradient(90deg,#000 0 1px,transparent 1px 2px);mask:repeating-linear-gradient(90deg,#000 0 1px,transparent 1px 2px)}
  .body{flex:1;border-bottom:1px solid #2b313c;border-left:1px solid transparent;border-radius:4px;padding:12px 11px 0 4px}
  .pick{display:flex;align-items:center;gap:8px;margin-bottom:4px}
  .sel{flex:1;position:relative;display:flex}
  select{appearance:none;flex:1;height:23px;background:#4d596d;color:#fff;border:1px solid #2a303b;border-radius:2px;padding:0 3px;font:12px Lato,sans-serif}
  .sel ui-icon{position:absolute;right:3px;top:7px;pointer-events:none}
  .secs{padding:0 7px 0 5px}
`, `
  <div class="title"><span class="grip"></span><span>PROPERTIES</span></div>
  <div class="body">
    <div class="pick"><span class="sel"><select aria-label="Object type"><option>External Reference</option></select>${ic('dd', 10)}</span>
      <button aria-label="Toggle PICKADD">${ic('pickadd')}</button><button aria-label="Select objects">${ic('selobj')}</button><button aria-label="Quick select">${ic('quick')}</button></div>
    <div class="secs">
    <prop-section label="General"><data name="Color" class="sw">ByLayer</data><data name="Layer">S-XIST</data><data name="Linetype" class="ln">ByLayer</data><data name="Linetype scale">1.000</data><data name="Plot style" class="dim">ByColor</data><data name="Lineweight" class="ln">ByLayer</data><data name="Transparency">ByLayer</data><data name="Hyperlink"></data></prop-section>
    <prop-section label="3D Visualization"><data name="Material">ByLayer</data></prop-section>
    <prop-section label="Geometry"><data name="Insertion point X">-930'-6"</data><data name="Insertion point Y">971'-0 5/8"</data><data name="Insertion point Z">0"</data><data name="Scale X">1.000</data><data name="Scale Y">1.000</data><data name="Scale Z">1.000</data></prop-section>
    <prop-section label="Misc"><data name="Name" class="dim">XREF1</data><data name="Saved Path" class="dim">..\\2_Arch\\CAD\\3843 College Ave, San Diego CA 92115....</data><data name="Rotation">0.00</data><data name="Block Unit" class="dim">Inches</data><data name="Unit factor" class="dim">1"</data><data name="Layer property overrides" class="dim">Yes</data></prop-section>
    </div>
  </div>
`);

/* Status bar */
define('cad-statusbar', `
  :host{display:flex;justify-content:space-between;height:34px;background:var(--dark);border-top:4px solid var(--panel);border-bottom:1px solid #444;flex:none;padding-left:16px}
  .tabs{display:flex;height:24px;align-items:center}
  .tabs slant-tab{margin-left:9px}
  .r{display:flex;gap:3px;padding:2px 2px 3px 0}
  .g{display:flex;background:var(--panel)}
  .g button{width:23px;height:24px}
  .g .d{width:16px}
  .g .t{width:auto;padding:0 5px}
  .g .scale{padding:0 4px 0 2px;gap:4px}
  .g.lone button{width:24px}
  .g.wide button{width:28px}
  .g .on{background:var(--hi)}
`, `
  <div class="tabs"><button aria-label="Layouts">${ic('burger')}</button><slant-tab on>Model</slant-tab><slant-tab style="margin:0 -10px">SXXX</slant-tab>
    <slash-mark></slash-mark><button aria-label="New layout" style="margin:0 9px 0 7px">${ic('plus')}</button><slash-mark></slash-mark></div>
  <div class="r">
    <div class="g"><button class="t">MODEL</button></div>
    <div class="g"><button aria-label="Grid">${ic('grid')}</button><button aria-label="Snap">${ic('snap')}</button><button class="d" aria-label="Snap menu">${ic('dd')}</button></div>
    <div class="g"><button aria-label="Ortho">${ic('ortho')}</button><button class="on" aria-label="Polar">${ic('polar', 18)}</button><button class="d" aria-label="Polar menu">${ic('dd')}</button><button aria-label="Isodraft">${ic('iso')}</button><button class="d" aria-label="Isodraft menu">${ic('dd')}</button></div>
    <div class="g"><button class="on" aria-label="Tracking">${ic('track')}</button><button class="on" aria-label="Object snap">${ic('osnap', 18)}</button><button class="d" aria-label="Snap modes">${ic('dd')}</button></div>
    <div class="g"><button class="on" aria-label="Lineweight">${ic('lwt')}</button></div>
    <div class="g"><button class="on" aria-label="Annotation visibility">${ic('ann1', 18)}</button><button aria-label="Auto scale">${ic('ann2', 18)}</button><button aria-label="Annotation scale">${ic('ann3')}</button><button class="t scale">4:1_XREF${ic('dd')}</button></div>
    <div class="g"><button aria-label="Workspace">${ic('gear')}</button><button class="d" aria-label="Workspaces">${ic('dd')}</button></div>
    <div class="g"><button aria-label="Annotation monitor">${ic('plus', 18)}</button></div>
    <div class="g lone"><button aria-label="Isolate">${ic('isolate', 18)}</button></div>
    <div class="g"><button class="on" aria-label="Performance">${ic('perf', 18)}</button></div>
    <div class="g wide"><button aria-label="Xrefs">${ic('xrefok')}</button><button aria-label="Plot warnings">${ic('warn1')}</button><button aria-label="Font warnings">${ic('warn2')}</button></div>
    <div class="g lone"><button aria-label="Clean screen">${ic('clean')}</button></div>
    <div class="g lone"><button aria-label="Customization">${ic('burger')}</button></div>
  </div>
`);

/* Windows taskbar */
define('task-item', `
  :host{display:block}
  button{width:40px;height:40px;position:relative;border-radius:4px}
  :host([active]) button{background:#2f3338}
  :host([run]) button::after{content:"";position:absolute;bottom:1px;left:17px;width:6px;height:3px;border-radius:2px;background:#9a9a9a}
  :host([active]) button::after{left:12px;width:16px;background:#4cc2ff}
  .badge{position:absolute;right:3px;top:3px}
`, `<button></button>`,
function (r) {
  const b = r.querySelector('button'); b.setAttribute('aria-label', this.getAttribute('icon'));
  b.innerHTML = ic(this.getAttribute('icon'), this.getAttribute('size') || 24) + (this.hasAttribute('badge') ? `<span class="badge">${ic('check', 14)}</span>` : '');
});
define('os-taskbar', `
  :host{display:grid;grid-template-columns:1fr auto 1fr;align-items:center;height:47px;background:#202020;flex:none;padding-bottom:1px;box-sizing:border-box}
  .mid{display:flex;align-items:center;gap:4px;grid-column:2}
  .find{display:flex;align-items:center;gap:11px;width:220px;height:32px;border-radius:16px;background:#3d4042;border:1px solid #4c4f51;padding:0 11px;margin:0 1px}
  .find input{flex:1;min-width:0;background:none;border:0;outline:0;padding:0;font:14px/20px Lato,sans-serif;color:#ccc}
  .find input::placeholder{color:#cfcfcf;opacity:1}
  .tray{display:flex;align-items:center;justify-content:flex-end;padding-right:19px;gap:16px;color:#fff}
  .q{display:flex;gap:8px;align-items:center;margin-right:-4px}
  .clock{text-align:right;line-height:16px}
`, `
  <div class="mid"><task-item icon="win"></task-item>
    <label class="find">${ic('search')}<input type="search" aria-label="Search" placeholder="Search"></label>
    <task-item icon="taskview"></task-item><task-item icon="snip" run></task-item><task-item icon="outlook" run></task-item><task-item icon="explorer" run></task-item>
    <task-item icon="teams" run badge></task-item><task-item icon="spotify" run></task-item><task-item icon="chrome" run></task-item><task-item icon="whatsapp" run></task-item>
    <task-item icon="acad" run active></task-item><task-item icon="burst"></task-item><task-item icon="paper" run></task-item><task-item icon="settings" run></task-item><task-item icon="gapp" run size="22"></task-item></div>
  <div class="tray">${ic('chev')}${ic('cloud')}${ic('mic')}<span class="q">${ic('wifi')}${ic('speaker')}${ic('battery')}</span><div class="clock">3:07 PM<br>5/22/2026</div></div>
`);

define('cad-app', `
  :host{display:flex;flex-direction:column;height:100vh;background:var(--dark)}
  main{flex:1;display:grid;grid-template-columns:minmax(0,1fr) minmax(480px,32.5%);min-height:0}
`, `
  <cad-titlebar></cad-titlebar><cad-menubar></cad-menubar><cad-ribbon></cad-ribbon><cad-filetabs></cad-filetabs>
  <main><cad-canvas></cad-canvas><cad-properties></cad-properties></main>
  <cad-statusbar></cad-statusbar><os-taskbar></os-taskbar>
`);
</script>
</body>
</html>
